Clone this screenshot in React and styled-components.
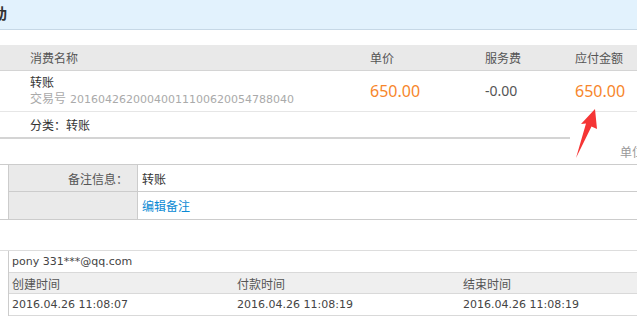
import React from "react";
import styled, { createGlobalStyle } from "styled-components";

const Global = createGlobalStyle`
  html, body { margin: 0; padding: 0; background: #fff; }
  body { font-family: "Noto Sans CJK SC", "Noto Sans", sans-serif; font-size: 12px; color: #333; overflow: hidden; }
`;

const Page = styled.div`
  position: relative;
  width: 637px;
  height: 317px;
  overflow: hidden;
`;

const TitleBar = styled.div`
  height: 29px;
  background: #e2f2fd;
  border-bottom: 1px solid #c6d8e6;
  display: flex;
  align-items: center;
  margin-bottom: 15px;
`;

const Title = styled.span`
  margin-left: -8px;
  font-size: 15px;
  font-weight: bold;
  color: #333;
  line-height: 1;
  margin-top: -4px;
`;

const OrderGrid = styled.div`
  display: grid;
  grid-template-columns: 370px 115px 90px 1fr;
  align-items: center;
  height: ${(p) => p.$h}px;
  background: ${(p) => p.$bg || "#fff"};
  border-bottom: 1px solid ${(p) => p.$line || "#e6e6e6"};
`;

const HeadCell = styled.div`
  padding-left: ${(p) => (p.$first ? 30 : 0)}px;
  color: #555;
  font-size: 12px;
  line-height: 16px;
  white-space: nowrap;
`;

const NameCell = styled.div`
  align-self: start;
  padding: 3px 0 0 30px;
  display: flex;
  flex-direction: column;
`;

const ItemName = styled.div`
  line-height: 16px;
  color: #333;
`;

const TradeNo = styled.div`
  line-height: 16px;
  color: #aaa;
  white-space: nowrap;
  display: flex;
  align-items: baseline;
  gap: 4px;
`;

const TradeDigits = styled.span`
  font-family: "DejaVu Sans", sans-serif;
  font-size: 11px;
`;

const Amount = styled.div`
  font-family: "Noto Sans", sans-serif;
  font-size: ${(p) => (p.$muted ? 14 : 16)}px;
  color: ${(p) => (p.$muted ? "#555" : "#f7862b")};
  line-height: 20px;
`;

const CategoryRow = styled.div`
  height: 25px;
  display: flex;
  align-items: center;
  padding-left: 30px;
  color: #333;
`;

const Divider = styled.div`
  width: 570px;
  height: 2px;
  background: #d4d4d4;
`;

const UnitRow = styled.div`
  height: 25px;
  display: flex;
  align-items: center;
  padding-left: 620px;
  color: #999;
  white-space: nowrap;
`;

const RemarkTable = styled.div`
  display: grid;
  grid-template-columns: 9px 129px 1fr;
  grid-template-rows: 27px 27px;
  border-top: 1px solid #ccc;
  border-bottom: 1px solid #ccc;
`;

const Gutter = styled.div`
  grid-row: span ${(p) => p.$span || 1};
  width: 8px;
  flex: 0 0 auto;
  border-right: 1px solid #ccc;
`;

const LabelCell = styled.div`
  background: #eaeaea;
  border-right: 1px solid #ccc;
  border-bottom: ${(p) => (p.$last ? "none" : "1px solid #ccc")};
  display: flex;
  align-items: center;
  justify-content: flex-end;
  padding-right: 9px;
  color: #555;
`;

const ValueCell = styled.div`
  border-bottom: ${(p) => (p.$last ? "none" : "1px solid #ccc")};
  display: flex;
  align-items: center;
  padding-left: 4px;
  color: #333;
`;

const Link = styled.a`
  color: #0b8ad4;
  text-decoration: none;
  cursor: pointer;
`;

const InfoTable = styled.div`
  margin-top: 30px;
  border-top: 1px solid #ddd;
  display: flex;
`;

const InfoBody = styled.div`
  flex: 1;
  display: flex;
  flex-direction: column;
`;

const InfoRow = styled.div`
  display: grid;
  grid-template-columns: 225px 226px 1fr;
  align-items: center;
  height: ${(p) => p.$h || 21}px;
  padding-left: 3px;
  background: ${(p) => (p.$head ? "#efefef" : "#fff")};
  border-bottom: 1px solid #d9d9d9;
`;

const InfoText = styled.div`
  font-family: "DejaVu Sans", "Noto Sans CJK SC", sans-serif;
  font-size: 11px;
  color: #444;
  white-space: nowrap;
`;

const InfoHead = styled.div`
  font-size: 12px;
  color: #555;
  white-space: nowrap;
`;

const Arrow = styled.svg`
  position: absolute;
  left: 570px;
  top: 105px;
  width: 32px;
  height: 58px;
`;

export default function App() {
  return (
    <>
      <Global />
      <Page>
        <TitleBar>
          <Title>动</Title>
        </TitleBar>

        <OrderGrid $h={25} $bg="#e9e9e9" $line="#d4d4d4">
          <HeadCell $first>消费名称</HeadCell>
          <HeadCell>单价</HeadCell>
          <HeadCell>服务费</HeadCell>
          <HeadCell>应付金额</HeadCell>
        </OrderGrid>

        <OrderGrid $h={40}>
          <NameCell>
            <ItemName>转账</ItemName>
            <TradeNo>
              交易号
              <TradeDigits>20160426200040011100620054788040</TradeDigits>
            </TradeNo>
          </NameCell>
          <Amount>650.00</Amount>
          <Amount $muted>-0.00</Amount>
          <Amount>650.00</Amount>
        </OrderGrid>

        <CategoryRow>分类：转账</CategoryRow>
        <Divider />
        <UnitRow>单位：元</UnitRow>

        <RemarkTable>
          <Gutter $span={2} />
          <LabelCell>备注信息：</LabelCell>
          <ValueCell>转账</ValueCell>
          <LabelCell $last />
          <ValueCell $last>
            <Link>编辑备注</Link>
          </ValueCell>
        </RemarkTable>

        <InfoTable>
          <Gutter />
          <InfoBody>
            <InfoRow>
              <InfoText>pony 331***@qq.com</InfoText>
            </InfoRow>
            <InfoRow $head $h={20}>
              <InfoHead>创建时间</InfoHead>
              <InfoHead>付款时间</InfoHead>
              <InfoHead>结束时间</InfoHead>
            </InfoRow>
            <InfoRow>
              <InfoText>2016.04.26 11:08:07</InfoText>
              <InfoText>2016.04.26 11:08:19</InfoText>
              <InfoText>2016.04.26 11:08:19</InfoText>
            </InfoRow>
          </InfoBody>
        </InfoTable>

        <Arrow viewBox="0 0 32 58">
          <polygon
            points="25,4 27,24 21.5,21.5 6,53 16,18.5 11,19"
            fill="#f53535"
          />
        </Arrow>
      </Page>
    </>
  );
}
